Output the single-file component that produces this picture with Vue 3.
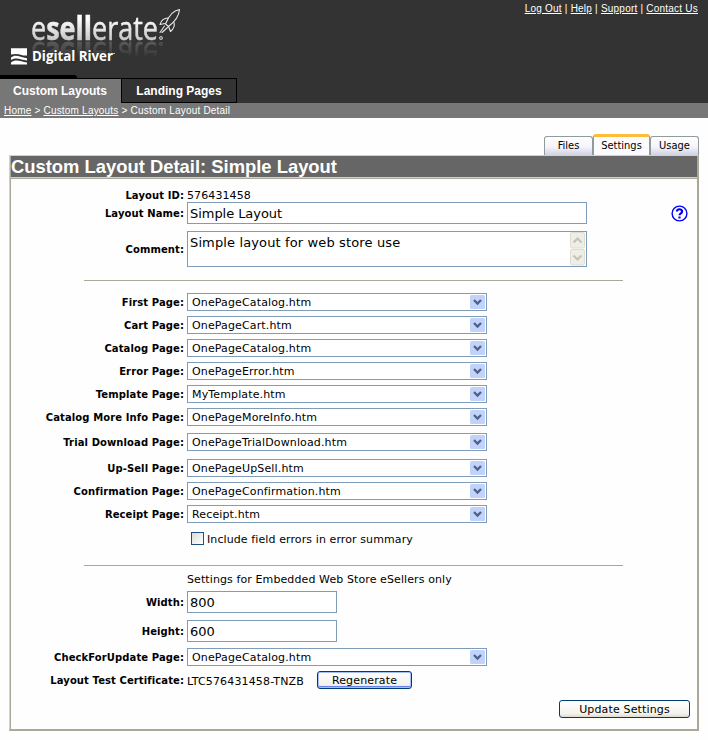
<script setup>
import { ref } from 'vue'

const topLinks = ['Log Out', 'Help', 'Support', 'Contact Us']
const pages = [
  { label: 'First Page:', value: 'OnePageCatalog.htm', gap: 5 },
  { label: 'Cart Page:', value: 'OnePageCart.htm', gap: 5 },
  { label: 'Catalog Page:', value: 'OnePageCatalog.htm', gap: 5 },
  { label: 'Error Page:', value: 'OnePageError.htm', gap: 5 },
  { label: 'Template Page:', value: 'MyTemplate.htm', gap: 5 },
  { label: 'Catalog More Info Page:', value: 'OnePageMoreInfo.htm', gap: 7 },
  { label: 'Trial Download Page:', value: 'OnePageTrialDownload.htm', gap: 8 },
  { label: 'Up-Sell Page:', value: 'OnePageUpSell.htm', gap: 5 },
  { label: 'Confirmation Page:', value: 'OnePageConfirmation.htm', gap: 5 },
  { label: 'Receipt Page:', value: 'Receipt.htm', gap: 0 },
]
const name = ref('Simple Layout')
const width = ref('800')
const height = ref('600')
</script>

<template>
  <div class="page">
    <header class="header">
      <svg class="wordmark" width="200" height="41" viewBox="0 0 200 41">
        <defs>
          <linearGradient id="word" x1="0" y1="0" x2="0" y2="1">
            <stop offset="0.3" stop-color="#fff" />
            <stop offset="0.8" stop-color="#c4c4c4" />
          </linearGradient>
        </defs>
        <text class="word" x="31" y="40" textLength="127" lengthAdjust="spacingAndGlyphs" fill="url(#word)" stroke="url(#word)" stroke-width="0.5">e<tspan class="heavy">sell</tspan>erate</text>
        <circle cx="161" cy="38" r="1.6" fill="#777" stroke="#ccc" stroke-width="0.8" />
      </svg>
      <svg class="logo" width="200" height="75" viewBox="0 0 200 75">
        <g fill="none" stroke="#e8e8e8" stroke-width="1.1" stroke-linejoin="round" stroke-linecap="round">
          <path d="M179.500 9.500C173 10.500 168.500 16 165.500 24L168.500 26.500C174.500 22 179 16 179.500 9.500Z" />
          <path d="M168 18C163.500 18 161 21 160 24.500L165 23.500M174 22.500C175 26 173.500 29 170.500 31.500L168.500 26.500" />
          <path d="M164.500 26L160 32.500M167.500 27.500L162 32.500" />
        </g>
        <g fill="#fff">
          <path d="M11 48.300H27V55.500C21 56 19 52.500 11 54.500Z" />
          <path d="M11 57.500C16 53.500 20 57.500 27 58.200V60.500C21 60 17 56.500 11 60Z" />
          <path d="M11 62.500C16 58.500 21 62 27 62.500V64.500H11Z" />
        </g>
        <text class="river" x="32" y="61" textLength="81" lengthAdjust="spacingAndGlyphs">Digital River</text>
        <path d="M113 53.500h2" stroke="#bbb" />
      </svg>
      <nav class="top-links">
        <template v-for="(l, i) in topLinks" :key="l">
          <span v-if="i" class="bar">|</span><a>{{ l }}</a>
        </template>
      </nav>
      <div class="notch"></div>
      <nav class="main-tabs">
        <a class="main-tab current">Custom Layouts</a>
        <a class="main-tab">Landing Pages</a>
      </nav>
    </header>
    <div class="crumbs"><a>Home</a> &gt; <a>Custom Layouts</a> &gt; Custom Layout Detail</div>

    <nav class="sub-tabs">
      <a class="sub-tab files">Files</a>
      <a class="sub-tab on">Settings</a>
      <a class="sub-tab usage">Usage</a>
    </nav>

    <main class="panel">
      <h1>Custom Layout Detail: Simple Layout</h1>
      <div class="body">
        <div class="row id-row"><label>Layout ID:</label><span class="plain">576431458</span></div>
        <div class="row name-row">
          <label>Layout Name:</label><input v-model="name" class="field wide" />
          <svg class="help" width="17" height="17" viewBox="0 0 17 17">
            <circle cx="8.500" cy="8.500" r="7.400" fill="none" stroke="#0000f0" stroke-width="1.400" />
            <path d="M5.900 6.600C5.900 3.500 11.100 3.500 11.100 6.500C11.100 8.300 8.500 8.300 8.500 10.300M8.500 11.500v2" fill="none" stroke="#0000f0" stroke-width="2.200" />
          </svg>
        </div>
        <div class="row comment-row">
          <label>Comment:</label>
          <div class="field area">
            <span>Simple layout for web store use</span>
            <div class="scroll">
              <svg v-for="d in ['M4.500 10.500l4-4l4 4', 'M4.500 6.500l4 4l4-4']" :key="d" width="17" height="17" viewBox="0 0 17 17">
                <rect x="1.500" y="0.500" width="14" height="15.500" rx="1.500" fill="#efeee6" stroke="#dfddd3" />
                <path :d="d" fill="none" stroke="#c5c3b9" stroke-width="2.200" />
              </svg>
            </div>
          </div>
        </div>
        <div class="rule"></div>
        <div v-for="p in pages" :key="p.label" class="row" :style="{ marginBottom: p.gap + 'px' }">
          <label>{{ p.label }}</label>
          <div class="select"><span>{{ p.value }}</span>
            <svg width="15" height="14" viewBox="0 0 15 14"><rect width="15" height="14" rx="1.500" fill="#c2d3fb" /><path d="M4 5l3.500 3.500L11 5" fill="none" stroke="#4d6185" stroke-width="2.300" /></svg>
          </div>
        </div>
        <div class="row check-row"><span class="box"></span><span class="plain check-text">Include field errors in error summary</span></div>
        <div class="rule second"></div>
        <div class="row note-row"><label></label><span class="plain">Settings for Embedded Web Store eSellers only</span></div>
        <div class="row width-row"><label>Width:</label><input v-model="width" class="field short" /></div>
        <div class="row height-row"><label>Height:</label><input v-model="height" class="field short" /></div>
        <div class="row">
          <label>CheckForUpdate Page:</label>
          <div class="select"><span>OnePageCatalog.htm</span>
            <svg width="15" height="14" viewBox="0 0 15 14"><rect width="15" height="14" rx="1.500" fill="#c2d3fb" /><path d="M4 5l3.500 3.500L11 5" fill="none" stroke="#4d6185" stroke-width="2.300" /></svg>
          </div>
        </div>
        <div class="row cert-row">
          <label>Layout Test Certificate:</label><span class="plain cert">LTC576431458-TNZB</span>
          <button class="btn focus">Regenerate</button>
        </div>
        <div class="actions"><button class="btn update">Update Settings</button></div>
      </div>
    </main>
  </div>
</template>

<style>
body { background: #fff; }
</style>

<style scoped>
* { box-sizing: border-box; }
.page { width: 708px; height: 740px; background: #fefefe; color: #000; font: 11px/14px "DejaVu Sans", Verdana, sans-serif; overflow: hidden; }
.header { height: 103px; background: #333; position: relative; display: flex; flex-direction: column; }
.logo, .wordmark { position: absolute; left: 0; top: 0; }
.wordmark { -webkit-box-reflect: below 0 linear-gradient(transparent 60%, rgba(255, 255, 255, 0.28)); }
.word { font: 33px "Open Sans", sans-serif; }
.heavy { font-weight: 700; }
.river { font: 700 15px "Open Sans", sans-serif; fill: #fff; }
.top-links { height: 75px; padding: 2px 10px 0 0; display: flex; justify-content: flex-end; color: #fff; font: 10px/14px "Liberation Sans", Arial, sans-serif; letter-spacing: 0.22px; }
.top-links a { text-decoration: underline; }
.bar { margin: 0 3px; }
.notch { width: 77px; height: 3px; background: #000; border-top-right-radius: 3px; }
.main-tabs { display: flex; height: 25px; }
.main-tab { width: 116px; background: #333; border: 1px solid #000; color: #fff; font: bold 12px/24px "Liberation Sans", Arial, sans-serif; text-align: center; }
.main-tab.current { width: 121px; background: #777; border: 0; border-top: 1px solid #000; padding-right: 1px; }
.crumbs { height: 15px; background: #777; color: #fff; padding-left: 4px; font: 10px/16px "Liberation Sans", Arial, sans-serif; letter-spacing: 0.2px; }
.crumbs a { text-decoration: underline; }
.sub-tabs { display: flex; justify-content: flex-end; align-items: flex-end; height: 37px; padding-right: 9px; }
.sub-tab { height: 19px; border: 1px solid #919b9c; border-bottom: 0; border-radius: 3px 3px 0 0; background: linear-gradient(#fff, #f4f4fa 55%, #d2d2e4); text-align: center; font: 11px/17px "DejaVu Sans Condensed", "DejaVu Sans", sans-serif; }
.files { width: 49px; }
.usage { width: 49px; }
.sub-tab.on { width: 57px; height: 21px; border-top: 3px solid #fdbd3a; background: #fcfcfe; line-height: 17px; }
.panel { margin-left: 9px; width: 690px; height: 576px; border: 1px solid #d8d2bd; border-right: 2px solid #aca899; border-bottom: 2px solid #aca899; }
h1 { margin: 0; height: 21px; background: #666; color: #fff; border-left: 1px solid #aca899; font: bold 18.400px/22px "Liberation Sans", Arial, sans-serif; }
.body { border-top: 1px solid #d8d2bd; border-left: 1px solid #aca899; height: 552px; padding-top: 11px; box-shadow: inset 0 1px #aca899; }
.row { display: flex; align-items: center; height: 18px; }
label { width: 173px; text-align: right; font-weight: bold; font-size: 10px; letter-spacing: 0.1px; margin-right: 3px; white-space: nowrap; padding-top: 1px; }
.plain { white-space: nowrap; letter-spacing: 0.1px; }
.id-row { height: 13px; }
.name-row { height: 22px; }
.field { border: 1px solid #7f9db9; background: #fff; font: 13px/18px "DejaVu Sans", sans-serif; padding: 0 2px; height: 22px; color: #000; outline: 0; }
.wide { width: 400px; letter-spacing: -0.05px; }
.help { margin-left: 84px; }
.comment-row { height: 36px; margin-top: 7px; }
.area { width: 400px; height: 36px; display: flex; justify-content: space-between; padding: 0; letter-spacing: 0.13px; }
.area span { padding: 2px 2px; }
.scroll { width: 17px; display: flex; flex-direction: column; }
.rule { width: 539px; height: 1px; background: #aca899; margin: 13px 0 12px 73px; }
.select { width: 300px; height: 18px; border: 1px solid #7f9db9; background: #fff; display: flex; justify-content: space-between; align-items: center; padding: 0 1px 0 4px; letter-spacing: 0.14px; }
.select span { padding-top: 2px; }
.check-row { height: 16px; margin-top: 7px; padding-left: 180px; }
.box { width: 13px; height: 13px; border: 1px solid #1c5180; background: linear-gradient(135deg, #dcdcd7, #fff); margin-right: 3px; }
.check-text { padding-top: 4px; }
.rule.second { margin: 19px 0 7px 73px; }
.note-row { height: 14px; }
.width-row { height: 22px; margin-top: 4px; }
.height-row { height: 22px; margin: 7px 0 6px; }
.short { width: 150px; }
.cert-row { margin-top: 5px; }
.cert { width: 130px; padding-top: 4px; letter-spacing: 0.15px; }
.btn { height: 18px; width: 95px; border: 1px solid #003c74; border-radius: 3px; background: linear-gradient(#fff, #f3f2ec 80%, #dcd8cc); font: 11px/14px "DejaVu Sans", sans-serif; letter-spacing: 0.15px; padding: 1px 0 0; color: #000; }
.focus { box-shadow: inset 0 0 0 1px #a5bff0, inset 0 -2px #6982ee; }
.actions { display: flex; justify-content: flex-end; margin: 11px 7px 0 0; }
.update { width: 131px; }
</style>
